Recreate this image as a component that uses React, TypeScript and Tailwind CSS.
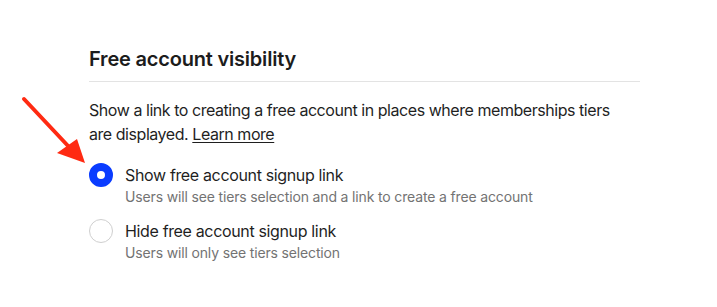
import React from "react";

export default function App() {
  return (
    <div className="relative w-[717px] h-[307px] bg-white" style={{ fontFamily: "Inter, 'Noto Sans', sans-serif" }}>
      <svg className="absolute left-0 top-0" width="120" height="180" viewBox="0 0 120 180">
        <line x1="24" y1="99" x2="70" y2="148" stroke="#ff2a12" strokeWidth="4" strokeLinecap="round" />
        <polygon points="85,163 57,153 77,139" fill="#ff2a12" />
      </svg>
      <div className="pl-[89px] pt-[47px] w-[640px]">
        <div className="border-b border-[#e3e3e3] pb-[10px]">
          <h2 className="text-[20px] leading-[24px] font-semibold text-[#1c1c1c] tracking-[-0.2px]">Free account visibility</h2>
        </div>
        <p className="mt-[16px] max-w-[530px] text-[16px] leading-[24px] text-[#1f1f1f] tracking-[-0.45px]">
          Show a link to creating a free account in places where memberships tiers are displayed.{" "}
          <a className="underline underline-offset-2 text-[#1f1f1f]">Learn more</a>
        </p>
        <div className="mt-[17px] flex flex-col gap-[12px]">
          <label className="flex items-start gap-[12px]">
            <span className="w-[24px] h-[24px] rounded-full border-[8px] border-[#0a3cff] bg-white shrink-0" />
            <span className="flex flex-col">
              <span className="text-[16px] leading-[24px] text-[#1f1f1f] tracking-[-0.35px]">Show free account signup link</span>
              <span className="text-[14px] leading-[20px] text-[#737373] tracking-[-0.15px]">Users will see tiers selection and a link to create a free account</span>
            </span>
          </label>
          <label className="flex items-start gap-[12px]">
            <span className="w-[24px] h-[24px] rounded-full border border-[#cfcfcf] bg-white shrink-0" />
            <span className="flex flex-col">
              <span className="text-[16px] leading-[24px] text-[#1f1f1f] tracking-[-0.35px]">Hide free account signup link</span>
              <span className="text-[14px] leading-[20px] text-[#737373] tracking-[-0.15px]">Users will only see tiers selection</span>
            </span>
          </label>
        </div>
      </div>
    </div>
  );
}
